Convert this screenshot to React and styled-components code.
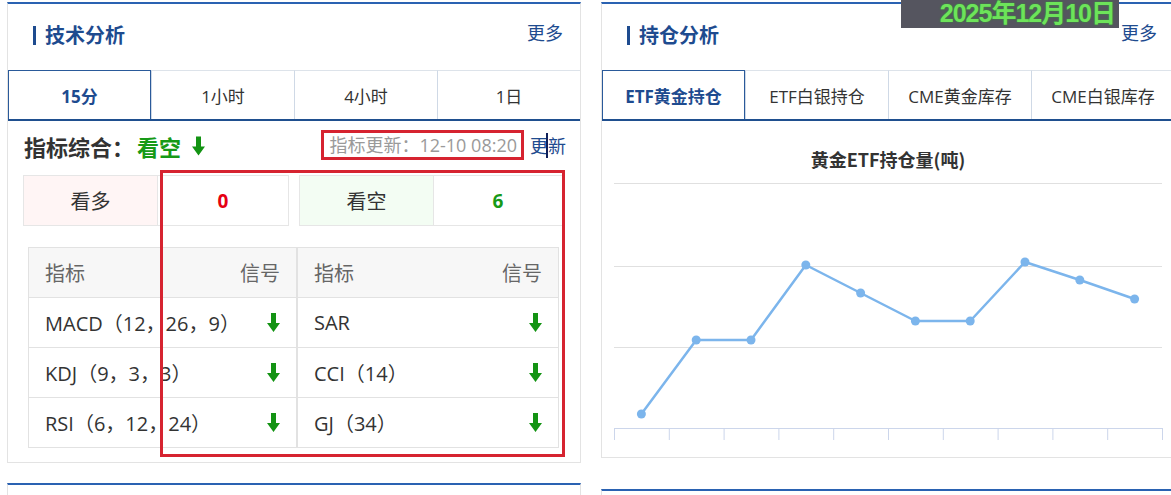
import React from "react";
import styled, { createGlobalStyle } from "styled-components";

const GlobalStyle = createGlobalStyle`
  html, body {
    margin: 0;
    padding: 0;
    background: #fff;
    overflow: hidden;
  }
  body {
    font-family: "Open Sans", "Noto Sans CJK SC", sans-serif;
    color: #333;
  }
  *, *::before, *::after {
    box-sizing: border-box;
  }
`;

const Page = styled.div`
  position: relative;
  display: flex;
  gap: 20px;
  padding-left: 7px;
  width: 1200px;
  height: 495px;
  overflow: hidden;
`;

const Column = styled.div`
  display: flex;
  flex-direction: column;
  width: 574px;
  flex-shrink: 0;
`;

const Panel = styled.div`
  margin-top: 2px;
  border: 1px solid #e3e3e3;
  border-top: 2px solid #2a62b2;
  padding-bottom: ${(p) => p.$pb || 0}px;
`;

const Stub = styled.div`
  margin-top: ${(p) => p.$mt}px;
  flex: 1;
  border: 1px solid #e3e3e3;
  border-top: 2px solid #2a62b2;
  border-bottom: none;
`;

const TitleRow = styled.div`
  display: flex;
  align-items: center;
  justify-content: space-between;
  height: 66px;
  padding: 0 17px 4px 25px;
`;

const Title = styled.div`
  display: flex;
  align-items: center;
  gap: 9px;
  font-family: "Noto Sans CJK SC", sans-serif;
  font-weight: 700;
  font-size: 20px;
  line-height: 24px;
  color: #1e4b8f;
  &::before {
    content: "";
    width: 3px;
    height: 19px;
    background: #1e4b8f;
  }
`;

const More = styled.a`
  font-family: "Noto Sans CJK SC", sans-serif;
  font-size: 18px;
  line-height: 22px;
  color: #1e4b8f;
  margin-top: -6px;
`;

const Tabs = styled.div`
  display: grid;
  grid-template-columns: repeat(4, 1fr);
  border-bottom: 2px solid #1f4f8f;
`;

const Tab = styled.div`
  height: 49px;
  display: flex;
  align-items: center;
  justify-content: center;
  font-size: 17px;
  font-family: "Open Sans", "Noto Sans CJK SC", sans-serif;
  color: ${(p) => (p.$active ? "#1e4b8f" : "#333")};
  font-weight: ${(p) => (p.$active ? 700 : 400)};
  border-top: 1px solid ${(p) => (p.$active ? "#2a5a9a" : "#dde3ea")};
  border-left: 1px solid ${(p) => (p.$active ? "#2a5a9a" : "#cfd9e6")};
  border-right: ${(p) => (p.$active ? "1px solid #2a5a9a" : "none")};
  &:first-child {
    border-left-color: ${(p) => (p.$active ? "#2a5a9a" : "transparent")};
  }
`;

const HeaderRow = styled.div`
  height: 49px;
  display: flex;
  align-items: center;
  justify-content: space-between;
  padding: 0 14px 0 16px;
`;

const Summary = styled.div`
  display: flex;
  align-items: center;
  font-family: "Noto Sans CJK SC", sans-serif;
  font-size: 22px;
  font-weight: 700;
  color: #333;
`;

const Verdict = styled.span`
  color: #179a17;
  display: flex;
  align-items: center;
  gap: 11px;
  margin-left: 3px;
`;

const UpdateWrap = styled.div`
  display: flex;
  align-items: center;
  gap: 6px;
  margin-top: -2px;
`;

const UpdateTime = styled.div`
  border: 3px solid #d62330;
  padding: 0 4px 0 5px;
  height: 30px;
  line-height: 24px;
  font-size: 18px;
  color: #9a9a9a;
  font-family: "Open Sans", "Noto Sans CJK SC", sans-serif;
`;

const Refresh = styled.a`
  position: relative;
  font-family: "Noto Sans CJK SC", sans-serif;
  font-size: 18px;
  line-height: 22px;
  color: #1e4b8f;
  &::after {
    content: "";
    position: absolute;
    left: 16px;
    top: -1px;
    width: 2px;
    height: 25px;
    background: #10205a;
  }
`;

const Counts = styled.div`
  display: grid;
  grid-template-columns: 266px 264px;
  gap: 10px;
  margin: 5px 18px 0 15px;
`;

const CountBox = styled.div`
  display: grid;
  grid-template-columns: 134px 1fr;
  height: 51px;
  border: 1px solid #e6e6e6;
`;

const CountLabel = styled.div`
  display: flex;
  align-items: center;
  justify-content: center;
  background: ${(p) => p.$bg};
  border-right: 1px solid #e6e6e6;
  font-family: "Noto Sans CJK SC", sans-serif;
  font-size: 20px;
  color: #333;
`;

const CountValue = styled.div`
  display: flex;
  align-items: center;
  justify-content: center;
  font-family: "Open Sans", sans-serif;
  font-weight: 700;
  font-size: 19px;
  color: ${(p) => p.$color};
`;

const Table = styled.div`
  display: grid;
  grid-template-columns: 267px 1fr;
  margin: 21px 21px 0 20px;
  border: 1px solid #e2e2e2;
`;

const Half = styled.div`
  & + & {
    border-left: 2px solid #e2e2e2;
  }
`;

const Row = styled.div`
  height: 50px;
  display: flex;
  align-items: center;
  justify-content: space-between;
  padding: 0 16px;
  background: ${(p) => (p.$head ? "#f7f7f7" : "#fff")};
  color: ${(p) => (p.$head ? "#666" : "#333")};
  font-size: 20px;
  font-family: "Open Sans", "Noto Sans CJK SC", sans-serif;
  &:first-child {
    height: 49px;
  }
  & + & {
    border-top: 1px solid #e2e2e2;
  }
`;

const ChartTitle = styled.div`
  height: 54px;
  padding-top: 26px;
  text-align: center;
  line-height: 24px;
  font-family: "Noto Sans CJK SC", sans-serif;
  font-weight: 700;
  font-size: 18px;
  color: #333;
`;

const ChartSvg = styled.svg`
  display: block;
`;

const Annotation = styled.div`
  position: absolute;
  left: 160px;
  top: 170px;
  width: 405px;
  height: 287px;
  border: 3px solid #d62330;
  pointer-events: none;
`;

const DateBadge = styled.div`
  position: absolute;
  left: 901px;
  top: 0;
  width: 218px;
  height: 28px;
  background: #55555f;
  color: #6de35a;
  font-family: "Liberation Sans", "Noto Sans CJK SC", sans-serif;
  font-weight: 700;
  font-size: 25px;
  line-height: 26px;
  text-align: right;
  padding-right: 4px;
  letter-spacing: -1px;
  text-shadow: 0 0 2px #2e9e2e;
`;

const DownArrow = ({ w = 13, h = 19 }) => (
  <svg width={w} height={h} viewBox="0 0 13 19">
    <path d="M4 0h5v10h4l-6.5 9L0 10h4z" fill="#139313" />
  </svg>
);

const left = ["MACD（12，26，9）", "KDJ（9，3，3）", "RSI（6，12，24）"];
const right = ["SAR", "CCI（14）", "GJ（34）"];

const points = [239, 165, 165, 90, 118, 146, 146, 87, 105, 124];

const Chart = () => {
  const step = 54.8;
  const xs = points.map((_, i) => 12 + step * i + step / 2);
  const d = points.map((y, i) => `${i ? "L" : "M"}${xs[i]} ${y}`).join(" ");
  return (
    <ChartSvg width="572" height="275" viewBox="0 0 572 275">
      {[8, 91, 172].map((y) => (
        <line key={y} x1="12" x2="560" y1={y + 0.5} y2={y + 0.5} stroke="#e0e0e0" />
      ))}
      <line x1="12" x2="560" y1="253.5" y2="253.5" stroke="#ccd6eb" />
      {Array.from({ length: 11 }).map((_, i) => (
        <line
          key={i}
          x1={12.5 + step * i}
          x2={12.5 + step * i}
          y1="253"
          y2="265"
          stroke="#ccd6eb"
        />
      ))}
      <path d={d} fill="none" stroke="#7cb5ec" strokeWidth="2.5" strokeLinejoin="round" />
      {points.map((y, i) => (
        <circle key={i} cx={xs[i]} cy={y} r="4.5" fill="#7cb5ec" />
      ))}
    </ChartSvg>
  );
};

const SignalTable = ({ rows }) => (
  <Half>
    <Row $head>
      <span>指标</span>
      <span>信号</span>
    </Row>
    {rows.map((name) => (
      <Row key={name}>
        <span>{name}</span>
        <DownArrow />
      </Row>
    ))}
  </Half>
);

export default function App() {
  return (
    <>
      <GlobalStyle />
      <Page>
        <Column>
          <Panel $pb={14}>
            <TitleRow>
              <Title>技术分析</Title>
              <More>更多</More>
            </TitleRow>
            <Tabs>
              <Tab $active>15分</Tab>
              <Tab>1小时</Tab>
              <Tab>4小时</Tab>
              <Tab>1日</Tab>
            </Tabs>
            <HeaderRow>
              <Summary>
                指标综合：
                <Verdict>
                  看空 <DownArrow w={13} h={20} />
                </Verdict>
              </Summary>
              <UpdateWrap>
                <UpdateTime>指标更新：12-10 08:20</UpdateTime>
                <Refresh>更新</Refresh>
              </UpdateWrap>
            </HeaderRow>
            <Counts>
              <CountBox>
                <CountLabel $bg="#fff5f5">看多</CountLabel>
                <CountValue $color="#e60012">0</CountValue>
              </CountBox>
              <CountBox>
                <CountLabel $bg="#f3fdf3">看空</CountLabel>
                <CountValue $color="#179a17">6</CountValue>
              </CountBox>
            </Counts>
            <Table>
              <SignalTable rows={left} />
              <SignalTable rows={right} />
            </Table>
          </Panel>
          <Stub $mt={20} />
        </Column>
        <Column>
          <Panel $pb={7}>
            <TitleRow>
              <Title>持仓分析</Title>
              <More>更多</More>
            </TitleRow>
            <Tabs>
              <Tab $active>ETF黄金持仓</Tab>
              <Tab>ETF白银持仓</Tab>
              <Tab>CME黄金库存</Tab>
              <Tab>CME白银库存</Tab>
            </Tabs>
            <ChartTitle>黄金ETF持仓量(吨)</ChartTitle>
            <Chart />
          </Panel>
          <Stub $mt={31} />
        </Column>
        <Annotation />
        <DateBadge>2025年12月10日</DateBadge>
      </Page>
    </>
  );
}
